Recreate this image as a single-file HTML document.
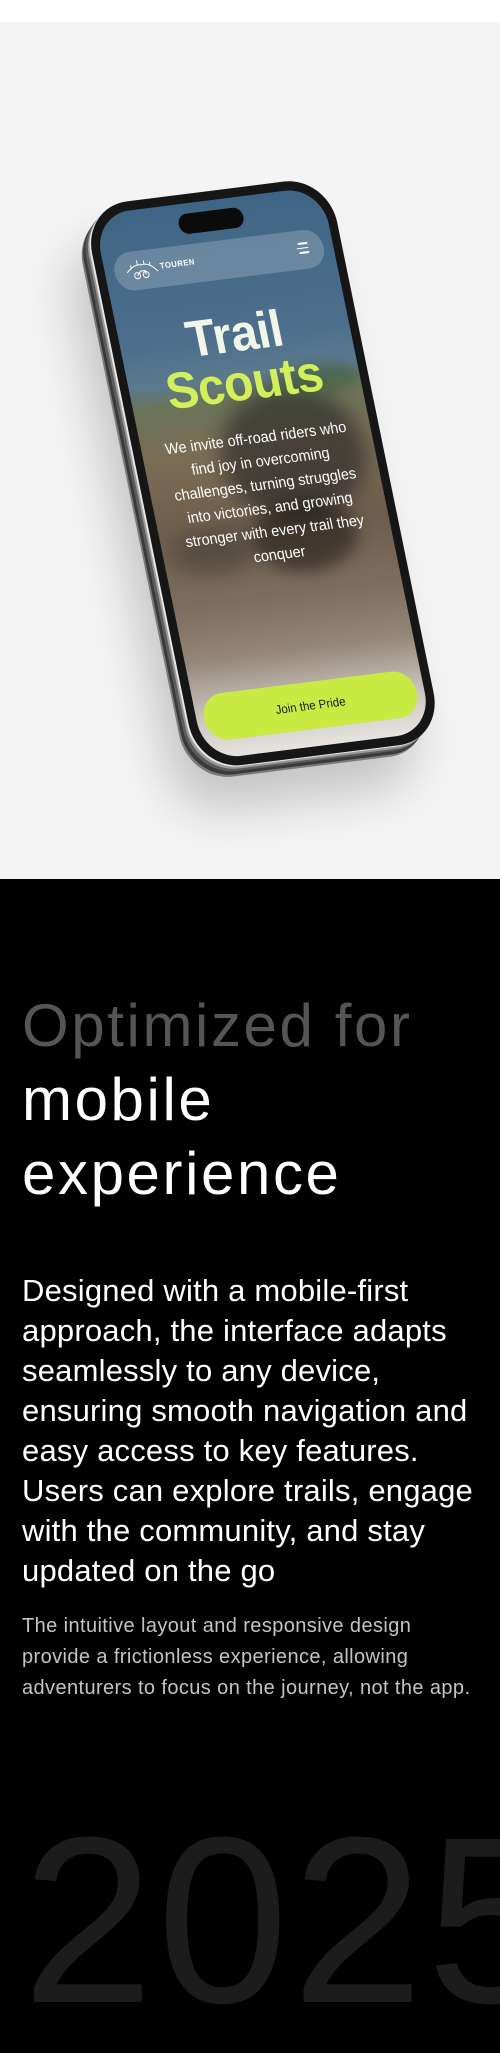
<!DOCTYPE html>
<html><head><meta charset="utf-8">
<style>
*{margin:0;padding:0;box-sizing:border-box}
html,body{width:500px;height:2048px;background:#000;overflow:hidden;font-family:"Liberation Sans",sans-serif}
#top{position:absolute;left:0;top:0;width:500px;height:879px;background:#f4f4f4;overflow:hidden}
#top .strip{position:absolute;left:0;top:0;width:500px;height:22px;background:#fff}
.phone{position:absolute;left:0;top:0;width:240px;height:540px;transform-origin:0 0;transform:matrix(0.95,-0.12,0.207,1.01,93,215)}
.frame{position:absolute;left:-9px;top:-9px;width:258px;height:558px;border-radius:46px;background:#161616;
box-shadow:-2px 1px 0 #e8e8e8,-4px 3px 0 #9a9a9a,-7px 5px 0 #5c5c5c,-10px 8px 0 #3a3a3a,-12px 10px 0 #7a7a7a,-30px 40px 50px rgba(0,0,0,.2)}
.screen{position:absolute;left:0;top:0;width:240px;height:540px;border-radius:38px;overflow:hidden;
background:linear-gradient(180deg,#3f6586 0%,#4d6f8c 25%,#5b7a8d 32%,#6a7459 36%,#7a6d55 45%,#6d5d4c 60%,#7c6d5e 72%,#938677 82%,#c9c3bd 92%,#e6e3e0 100%)}
.blob{position:absolute;border-radius:50%}
.island{position:absolute;left:86px;top:10px;width:68px;height:20px;border-radius:10px;background:#0b0b0b}
.nav{position:absolute;left:10px;top:40px;width:220px;height:38px;border-radius:19px;background:rgba(255,255,255,.2)}
.nav .brand{position:absolute;left:48px;top:13px;color:#fff;font-weight:bold;font-size:8px;letter-spacing:.5px}
.nav .ham{position:absolute;right:16px;top:12px;width:12px}
.nav .ham i{display:block;height:1.5px;background:#fff;margin-bottom:3px;margin-left:2px}
.nav .ham i:nth-child(2){margin-left:0}
.h{position:absolute;left:0;width:240px;text-align:center;font-weight:bold;font-size:50px;line-height:48px;letter-spacing:-.5px}
.p{position:absolute;left:0;top:224px;width:240px;text-align:center;color:#fff;font-size:15px;line-height:23px;white-space:nowrap}
.btn{position:absolute;left:8px;top:477px;width:224px;height:46px;border-radius:23px;background:#c8ea42;color:#1a1a1a;font-size:12px;text-align:center;line-height:46px}
.sec{position:absolute;left:22px;color:#fff;white-space:nowrap}
.h1{top:989px;font-size:60px;line-height:74px;letter-spacing:2.6px}
.h1 .g{color:#555}
.b{top:1271px;font-size:31px;line-height:40px;letter-spacing:.2px}
.s{top:1611px;font-size:20px;line-height:31px;color:#c4c4c4;letter-spacing:.4px}
.yr{position:absolute;left:22px;top:1802px;font-size:237px;line-height:237px;color:#1c1c1c;letter-spacing:3px;white-space:nowrap}
</style></head><body>
<div id="top"><div class="strip"></div>
<div class="phone">
 <div class="frame"></div>
 <div class="screen">
  <div class="blob" style="left:80px;top:190px;width:150px;height:130px;background:rgba(30,30,35,.55);filter:blur(10px)"></div>
  <div class="blob" style="left:95px;top:300px;width:110px;height:70px;background:rgba(25,22,20,.55);filter:blur(8px)"></div>
  <div class="blob" style="left:10px;top:320px;width:90px;height:40px;background:rgba(60,55,50,.5);filter:blur(10px)"></div>
  <div class="blob" style="left:150px;top:170px;width:90px;height:30px;background:rgba(60,90,50,.5);filter:blur(6px)"></div>
  <div class="island"></div>
  <div class="nav">
   <svg style="position:absolute;left:12px;top:8px" width="34" height="22" viewBox="0 0 34 22" fill="none" stroke="#fff" stroke-width="1">
    <path d="M1 12 Q10 4 17 6 Q25 4 33 14"/><path d="M6 9v-4M13 6v-5M20 6v-4M26 8v-4"/>
    <circle cx="11" cy="16" r="3"/><circle cx="20" cy="16" r="3"/><path d="M11 16l4-4h5l0 4"/>
   </svg>
   <div class="brand">TOUREN</div>
   <div class="ham"><i></i><i></i><i></i></div>
  </div>
  <div class="h" style="top:108px;color:#f2f6e8">Trail</div>
  <div class="h" style="top:156px;color:#d2ee5a">Scouts</div>
  <div class="p">We invite off-road riders who<br>find joy in overcoming<br>challenges, turning struggles<br>into victories, and growing<br>stronger with every trail they<br>conquer</div>
  <div class="btn">Join the Pride</div>
 </div>
</div>
</div>
<div class="sec h1"><span class="g">Optimized for</span><br>mobile<br>experience</div>
<div class="sec b">Designed with a mobile-first<br>approach, the interface adapts<br>seamlessly to any device,<br>ensuring smooth navigation and<br>easy access to key features.<br>Users can explore trails, engage<br>with the community, and stay<br>updated on the go</div>
<div class="sec s">The intuitive layout and responsive design<br>provide a frictionless experience, allowing<br>adventurers to focus on the journey, not the app.</div>
<div class="yr">2025</div>
</body></html>
